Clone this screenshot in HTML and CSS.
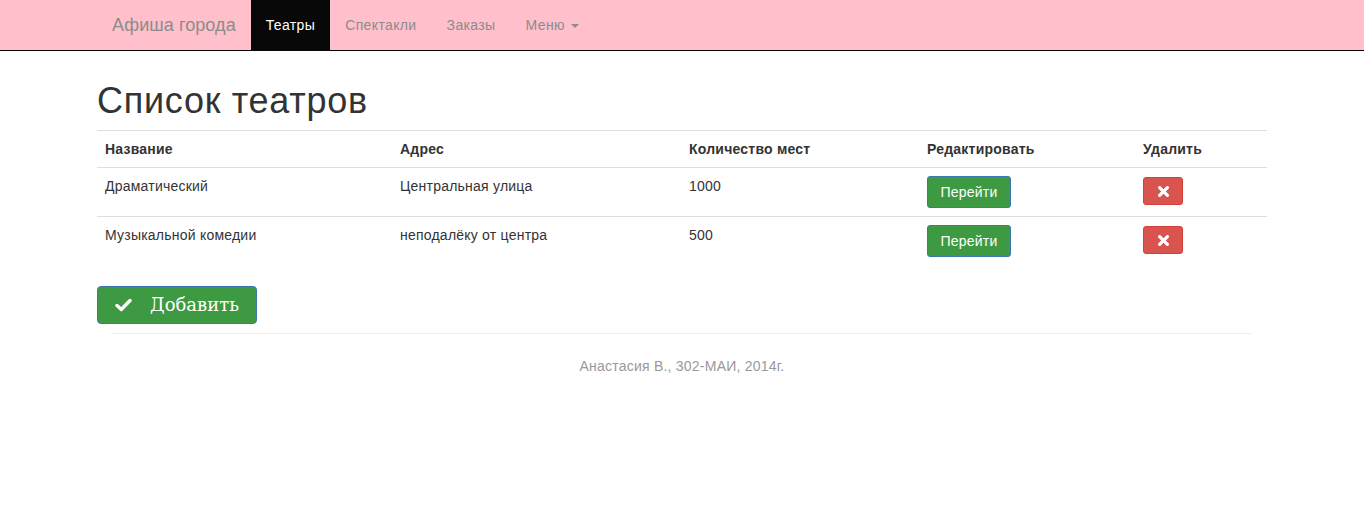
FILE: index.html
```html
<!DOCTYPE html>
<html lang="ru">
<head>
<meta charset="utf-8">
<title>Афиша города</title>
<link rel="stylesheet" href="styles.css">
</head>
<body>
<nav class="navbar">
  <div class="navbar-inner">
    <a class="brand" href="#">Афиша города</a>
    <ul class="nav">
      <li class="active"><a href="#">Театры</a></li>
      <li><a href="#">Спектакли</a></li>
      <li><a href="#">Заказы</a></li>
      <li><a href="#">Меню <span class="caret"></span></a></li>
    </ul>
  </div>
</nav>
<main class="main">
  <h1 class="title">Список театров</h1>
  <table class="table">
    <thead>
      <tr>
        <th class="c1">Название</th>
        <th class="c2">Адрес</th>
        <th class="c3">Количество мест</th>
        <th class="c4">Редактировать</th>
        <th class="c5">Удалить</th>
      </tr>
    </thead>
    <tbody>
      <tr>
        <td>Драматический</td>
        <td>Центральная улица</td>
        <td>1000</td>
        <td><a class="btn btn-go" href="#">Перейти</a></td>
        <td><a class="btn btn-del" href="#"><svg class="x-icon" width="11" height="11" viewBox="0 0 11 11"><path d="M1.6 1.6 L9.4 9.4 M9.4 1.6 L1.6 9.4" stroke="#fff" stroke-width="3.2" stroke-linecap="round"/></svg></a></td>
      </tr>
      <tr>
        <td>Музыкальной комедии</td>
        <td>неподалёку от центра</td>
        <td>500</td>
        <td><a class="btn btn-go" href="#">Перейти</a></td>
        <td><a class="btn btn-del" href="#"><svg class="x-icon" width="11" height="11" viewBox="0 0 11 11"><path d="M1.6 1.6 L9.4 9.4 M9.4 1.6 L1.6 9.4" stroke="#fff" stroke-width="3.2" stroke-linecap="round"/></svg></a></td>
      </tr>
    </tbody>
  </table>
  <a class="btn-add" href="#"><svg class="ok-icon" width="17" height="14" viewBox="0 0 17 14"><path d="M2 7.5 L6.3 11.5 L15 2.5" fill="none" stroke="#fff" stroke-width="3.4" stroke-linecap="round" stroke-linejoin="round"/></svg><span class="add-text">Добавить</span></a>
</main>
<footer class="footer">
  <hr class="footer-rule">
  <p class="footer-text">Анастасия В., 302-МАИ, 2014г.</p>
</footer>
</body>
</html>
```

FILE: styles.css
```css
* { box-sizing: border-box; }

body {
  margin: 0;
  font-family: "Liberation Sans", Arial, sans-serif;
  font-size: 14px;
  line-height: 20px;
  letter-spacing: 0.016em;
  color: #333;
  background: #fff;
}

a { text-decoration: none; }

.navbar {
  background: #ffc0cb;
  border-bottom: 1px solid #000;
  height: 51px;
}

.navbar-inner {
  width: 1170px;
  margin: 0 auto;
  display: flex;
  height: 50px;
}

.brand {
  display: block;
  padding: 15px;
  font-size: 18px;
  line-height: 20px;
  height: 50px;
  letter-spacing: 0.004em;
  color: #8c8c8c;
}

.nav {
  list-style: none;
  margin: 0;
  padding: 0;
  display: flex;
}

.nav li a {
  display: block;
  padding: 15px;
  line-height: 20px;
  height: 51px;
  letter-spacing: 0.026em;
  color: #8c8c8c;
}

.nav li.active a {
  background: #080808;
  color: #fff;
}

.caret {
  display: inline-block;
  width: 0;
  height: 0;
  margin-left: 2px;
  vertical-align: middle;
  border-top: 4px solid #8c8c8c;
  border-left: 4px solid transparent;
  border-right: 4px solid transparent;
}

.main {
  width: 1170px;
  margin: 0 auto;
}

.title {
  margin: 30px 0 9px;
  font-size: 36px;
  line-height: 40px;
  font-weight: normal;
  letter-spacing: 0.02em;
  color: #333;
}

.table {
  width: 1170px;
  border-collapse: collapse;
  border-spacing: 0;
  margin-bottom: 21px;
}

.table th,
.table td {
  text-align: left;
  vertical-align: top;
  padding: 8px;
  line-height: 20px;
}

.table thead th {
  border-top: 1px solid #ddd;
  border-bottom: 1px solid #ddd;
  font-weight: bold;
}

.table tbody tr + tr td {
  border-top: 1px solid #ddd;
}

.c1 { width: 295px; }
.c2 { width: 289px; }
.c3 { width: 238px; }
.c4 { width: 216px; }
.c5 { width: 132px; }

.btn {
  display: inline-block;
  vertical-align: top;
  border-radius: 3px;
  color: #fff;
  text-align: center;
}

.btn-go {
  background: #3e9a42;
  border: 1px solid #3a78b4;
  padding: 5px 0;
  line-height: 20px;
  height: 32px;
  width: 84px;
}

.btn-del {
  background: #d9534f;
  border: 1px solid #d43f3a;
  margin-top: 1px;
  width: 40px;
  height: 28px;
  padding: 0;
  display: inline-flex;
  align-items: center;
  justify-content: center;
}

.x-icon { display: block; margin-top: 1px; }

.btn-add {
  display: inline-flex;
  align-items: center;
  width: 160px;
  height: 38px;
  padding: 0 16px 0 17px;
  background: #3e9a42;
  border: 1px solid #3a78b4;
  border-radius: 4px;
  color: #fff;
}

.ok-icon { display: block; flex: none; }

.add-text {
  margin-left: 18px;
  font-family: "DejaVu Serif", serif;
  font-size: 18px;
  line-height: 24px;
  letter-spacing: 0;
}

.footer {
  width: 1170px;
  margin: 0 auto;
  padding: 0 15px;
}

.footer-rule {
  margin: 9px 0 0;
  border: 0;
  border-top: 1px solid #eee;
  height: 0;
}

.footer-text {
  margin: 22px 0 0;
  text-align: center;
  color: #999;
}
```
